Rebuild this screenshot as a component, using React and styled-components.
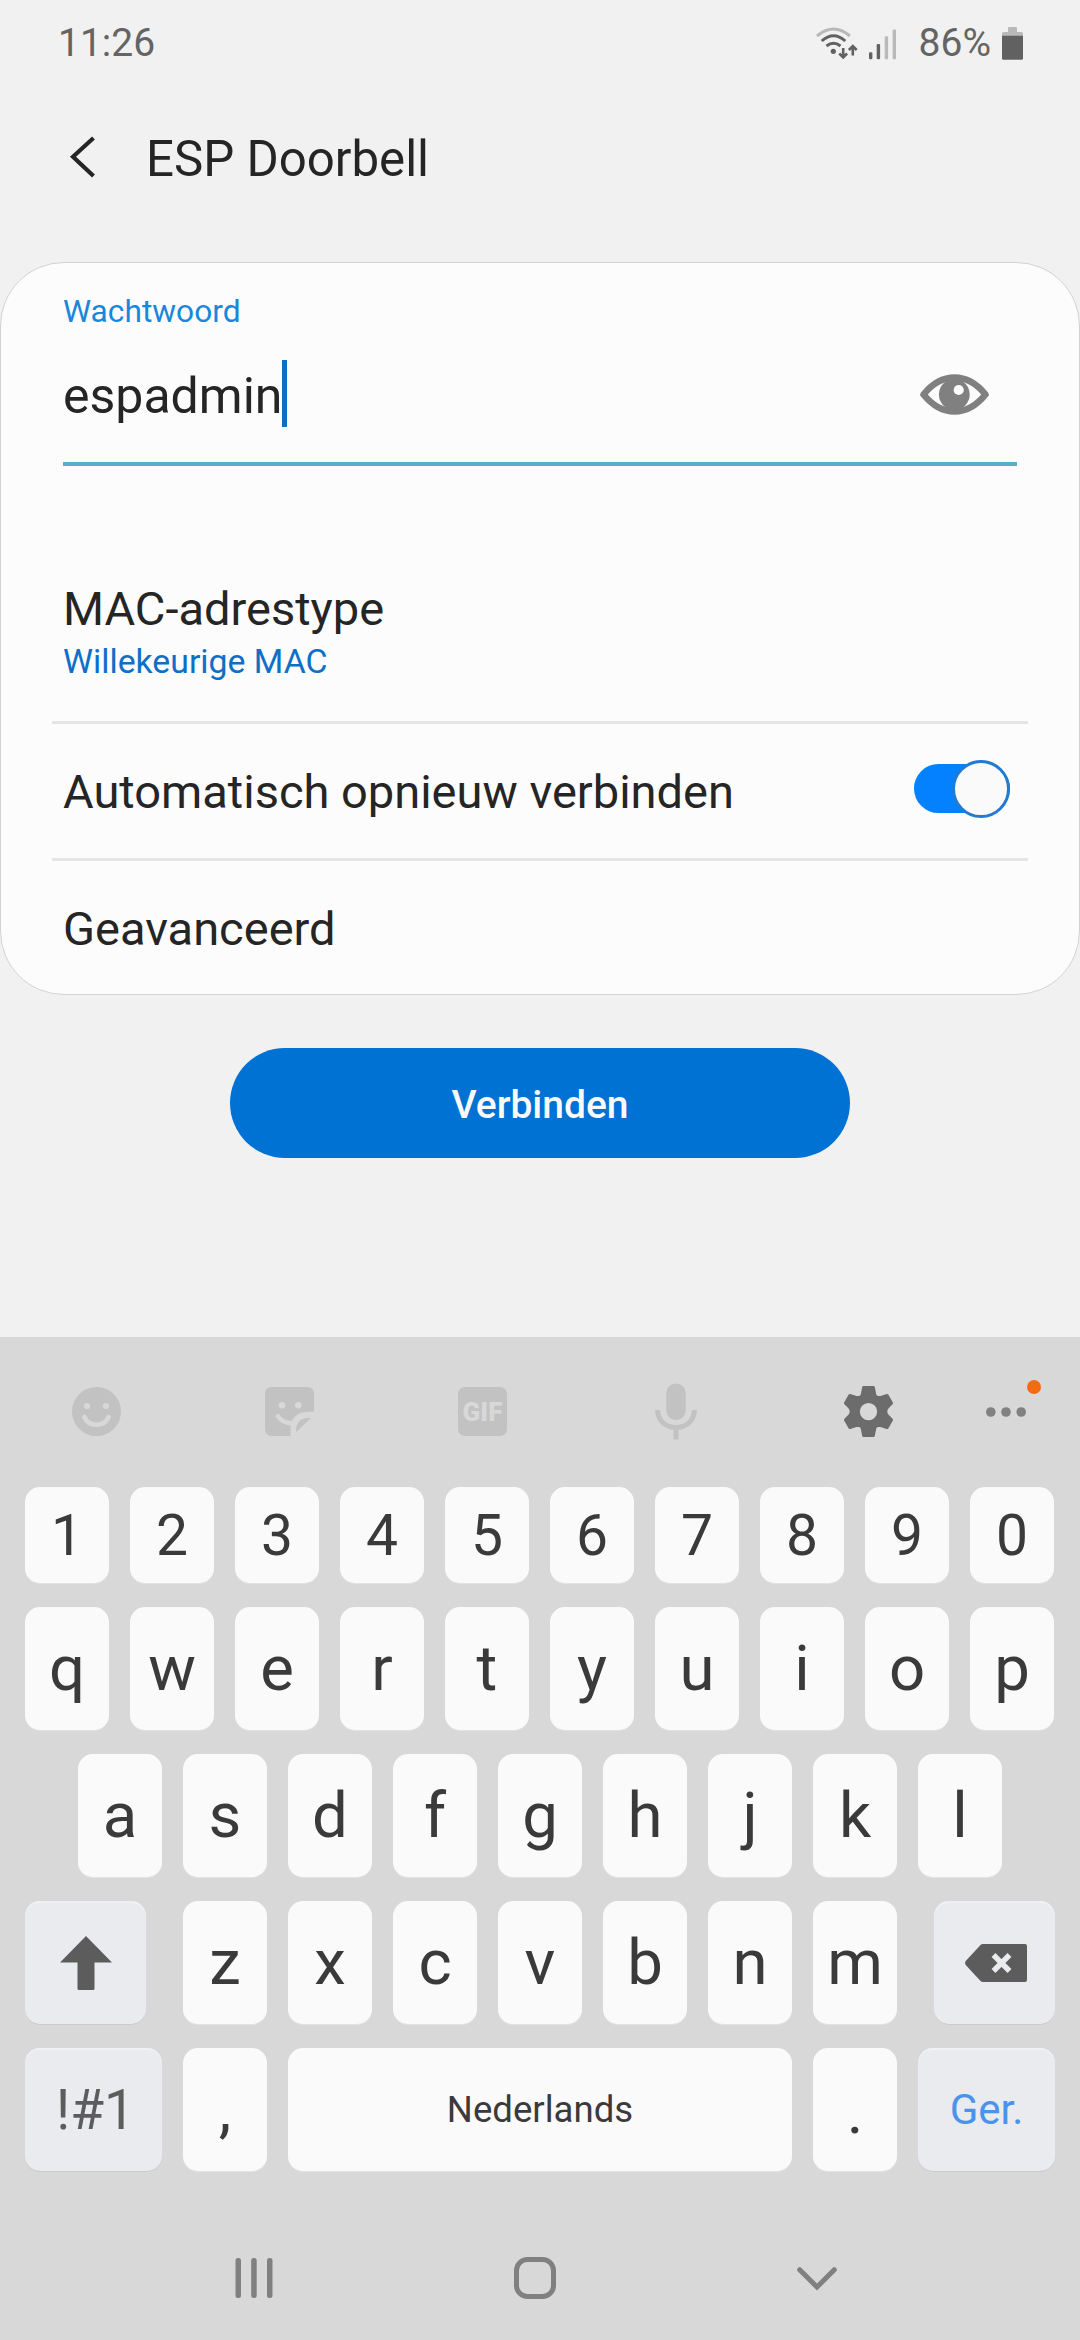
import React from "react";
import styled, { createGlobalStyle } from "styled-components";

const GlobalStyle = createGlobalStyle`
  * { box-sizing: border-box; }
  body { margin: 0; background: #f1f1f1; }
`;

const Screen = styled.main`
  display: flex;
  flex-direction: column;
  width: 1080px;
  height: 2340px;
  overflow: hidden;
  background: #f1f1f1;
  color: #252525;
  font-family: Roboto, "Liberation Sans", sans-serif;
`;

const Icon = styled.svg`
  display: block;
  flex: none;
  width: ${(p) => p.$w}px;
  height: ${(p) => p.$h}px;
  margin: ${(p) => p.$margin || 0};
  overflow: visible;
`;

/* Status bar */

const StatusBar = styled.header`
  display: flex;
  align-items: center;
  justify-content: space-between;
  height: 85px;
  padding: 0 57px 0 58px;
  color: #646464;
  font-size: 39px;
  line-height: 46px;
`;

const StatusIcons = styled.div`
  display: flex;
  align-items: center;
`;

const BatteryLevel = styled.span`
  margin: 0 11px 0 22px;
`;

/* App bar */

const AppBar = styled.nav`
  display: flex;
  align-items: center;
  height: 148px;
  margin-bottom: 29px;
  padding-left: 70px;
`;

const BackButton = styled.button`
  display: flex;
  margin: 0 51px 5px 0;
  padding: 0;
  border: 0;
  background: none;
`;

const Title = styled.h1`
  margin: 0;
  font-size: 49.2px;
  font-weight: 400;
  line-height: 58px;
`;

/* Settings card */

const Card = styled.section`
  display: flex;
  flex-direction: column;
  height: 733px;
  padding: 28px 51px 0;
  border: 1px solid #d2d2d2;
  border-radius: 64px;
  background: #fcfcfc;
`;

const FieldLabel = styled.label`
  flex: none;
  height: 40px;
  padding: 1px 0 0 11px;
  color: #1a87da;
  font-size: 31.7px;
  line-height: 40px;
`;

const Field = styled.div`
  display: flex;
  flex: none;
  align-items: center;
  height: 135px;
  margin: 0 11px;
  padding: 0 28px 2px 0;
  border-bottom: 4px solid #5eabcc;
`;

const FieldValue = styled.span`
  padding-top: 1px;
  font-size: 50px;
  line-height: 60px;
`;

const Caret = styled.span`
  width: 5px;
  height: 67px;
  margin: 0 auto 4px 0;
  background: #0b70c5;
`;

const Row = styled.div`
  display: flex;
  flex: none;
  align-items: center;
  justify-content: space-between;
  height: 134px;
  padding: 1px 18px 0 11px;

  &:last-child {
    height: 133px;
    padding-top: 3px;
  }
`;

const StackedRow = styled.div`
  display: flex;
  flex: none;
  flex-direction: column;
  height: 255px;
  padding: 116px 11px 0;
`;

const RowTitle = styled.span`
  font-size: 47px;
  line-height: 54px;
`;

const RowValue = styled.span`
  margin-top: 5px;
  color: #0f6fc6;
  font-size: 33.8px;
  line-height: 42px;
`;

const Divider = styled.hr`
  flex: none;
  width: 100%;
  height: 3px;
  margin: 0;
  border: 0;
  background: #e5e5e5;
`;

const Switch = styled.button`
  display: flex;
  align-items: center;
  justify-content: flex-end;
  width: 96px;
  height: 49px;
  margin-bottom: 6px;
  padding: 0;
  border: 0;
  border-radius: 25px;
  background: #0381fe;
`;

const Thumb = styled.span`
  flex: none;
  width: 58px;
  height: 58px;
  border: 3px solid #217bd2;
  border-radius: 50%;
  background: #fafafa;
`;

const ConnectButton = styled.button`
  align-self: center;
  width: 620px;
  height: 110px;
  margin-top: 53px;
  padding: 3px 0 0;
  border: 0;
  border-radius: 55px;
  background: #0072d4;
  color: #fafafa;
  font: 500 39px/46px Roboto, "Liberation Sans", sans-serif;
`;

/* Keyboard */

const Keyboard = styled.section`
  display: flex;
  flex-direction: column;
  height: 1003px;
  margin-top: auto;
  background: #d8d8d8;
`;

const Toolbar = styled.div`
  display: flex;
  height: 150px;
  padding-bottom: 1px;
`;

const Tool = styled.div`
  display: flex;
  align-items: center;
  justify-content: center;
  width: ${(p) => p.$w || 193}px;
  position: relative;
`;

const GifBadge = styled.span`
  width: 49px;
  height: 49px;
  border-radius: 7px;
  background: #c2c2c2;
  color: #d8d8d8;
  font-size: 26px;
  font-weight: 900;
  line-height: 50px;
  text-align: center;
`;

const NoticeDot = styled.span`
  position: absolute;
  top: 43px;
  right: 6px;
  width: 14px;
  height: 14px;
  border-radius: 50%;
  background: #f46c12;
`;

const Keys = styled.div`
  display: flex;
  flex-direction: column;
  gap: 24px;
`;

const KeyRow = styled.div`
  display: flex;
  gap: 21px;
  height: ${(p) => p.$h || 123}px;
  padding-left: ${(p) => p.$inset || 25}px;
`;

const Key = styled.button`
  display: flex;
  flex: none;
  align-items: center;
  justify-content: center;
  width: ${(p) => p.$w || 84}px;
  margin: ${(p) => p.$margin || 0};
  padding: ${(p) => p.$pad || "0"};
  border: 0;
  border-radius: 15px;
  background: ${(p) => (p.$fn ? "#e9ebef" : "#fafafa")};
  box-shadow: ${(p) =>
    p.$fn ? "0 1px 0 #c9cacd, inset 0 2px 0 #f0f1f3" : "0 1px 0 #e3e3e3"};
  color: ${(p) => p.$color || "#3a3a3a"};
  font: 400 ${(p) => p.$size || 63.5}px/1.17 Roboto, "Liberation Sans", sans-serif;
`;

const NavBar = styled.nav`
  display: flex;
  height: 124px;
  margin-top: auto;
  padding-left: 113px;
`;

const NavItem = styled.div`
  display: flex;
  align-items: center;
  justify-content: center;
  width: 281.5px;
`;

function WifiIcon() {
  return (
    <Icon $w={42} $h={34} viewBox="816 23 42 34" fill="none" strokeLinecap="butt">
      <path d="M817 33Q833.5 19 850 33" stroke="#b9b9b9" strokeWidth="3" />
      <path d="M821.700 38Q833.500 27.500 845.300 38" stroke="#616161" strokeWidth="3" />
      <path d="M826.500 43Q833.500 37.500 840.500 43" stroke="#616161" strokeWidth="3" />
      <circle cx="833.300" cy="48.300" r="2.600" fill="#616161" />
      <path
        d="M843.200 45v9M839.300 50.500l3.900 3.900 3.900-3.900M852.800 52.600v-9M848.900 47l3.900-3.900 3.900 3.900"
        stroke="#616161"
        strokeWidth="2.600"
      />
    </Icon>
  );
}

function SignalIcon() {
  return (
    <Icon $w={28} $h={34} $margin="0 0 0 11px" viewBox="869 23 28 34">
      <rect x="869" y="49.300" width="3.400" height="6.900" rx="1.200" fill="#616161" />
      <rect x="876.700" y="41" width="3.400" height="15.200" rx="1.200" fill="#616161" />
      <rect x="884.700" y="33.200" width="3.400" height="23" rx="1.200" fill="#b9b9b9" />
      <rect x="892.600" y="26.500" width="3.400" height="29.700" rx="1.200" fill="#b9b9b9" />
    </Icon>
  );
}

function BatteryIcon() {
  return (
    <Icon $w={21} $h={34} viewBox="0 0 21 34">
      <path d="M6 6V2q0-1 1-1h7q1 0 1 1v4h4.500q1.500 0 1.500 1.500V12H0V7.500Q0 6 1.500 6z" fill="#b9b9b9" />
      <path d="M0 9.700h21v22.500q0 1.500-1.500 1.500h-18Q0 33.700 0 32.200z" fill="#616161" />
    </Icon>
  );
}

function EyeIcon() {
  return (
    <Icon $w={69} $h={41} $margin="0 0 2px" viewBox="0 0 69 41">
      <path
        d="M3.500 20.500C12 10 22 3.500 34.500 3.500S57 10 65.500 20.500C57 31 47 37.500 34.500 37.500S12 31 3.500 20.500Z"
        fill="none"
        stroke="#808080"
        strokeWidth="6.600"
        strokeLinejoin="round"
      />
      <circle cx="34.300" cy="20.500" r="15.400" fill="#808080" />
      <circle cx="38.700" cy="16" r="5.100" fill="#fcfcfc" />
    </Icon>
  );
}

function SmileyIcon() {
  return (
    <Icon $w={49} $h={49} viewBox="0 0 49 49">
      <circle cx="24.500" cy="24.500" r="24.500" fill="#c2c2c2" />
      <circle cx="15" cy="19" r="3.100" fill="#d8d8d8" />
      <circle cx="34" cy="19" r="3.100" fill="#d8d8d8" />
      <path d="M12.300 30C17 40.300 32 40.300 36.700 30" fill="none" stroke="#d8d8d8" strokeWidth="4.600" strokeLinecap="round" />
    </Icon>
  );
}

function StickerIcon() {
  return (
    <Icon $w={49} $h={49} viewBox="0 0 49 49">
      <path
        d="M7 0H42Q49 0 49 7V24.800H43C31 25 25.500 32 25.500 42V49H7Q0 49 0 42V7Q0 0 7 0Z"
        fill="#c2c2c2"
      />
      <path d="M46 31 31 45.300C30.500 36 35.500 31 43 31Z" fill="#c2c2c2" />
      <circle cx="17" cy="18.300" r="3.300" fill="#d8d8d8" />
      <circle cx="33.300" cy="18.300" r="3.300" fill="#d8d8d8" />
      <path d="M12.800 29C16 34 20.500 36.300 27.500 36.200" fill="none" stroke="#d8d8d8" strokeWidth="4.400" strokeLinecap="round" />
    </Icon>
  );
}

function MicIcon() {
  return (
    <Icon $w={42} $h={57} viewBox="0 0 42 57">
      <rect x="11.300" y="0.400" width="19.400" height="36.800" rx="9.700" fill="#c2c2c2" />
      <path d="M2.500 27C3 50.300 39 50.300 39.500 27M21 44.500V56.600" fill="none" stroke="#c2c2c2" strokeWidth="5" />
    </Icon>
  );
}

function GearIcon() {
  return (
    <Icon $w={49} $h={51} viewBox="0 0 49 51">
      <path
        d="M19.500 0h10q1 0 1.300 1l1.400 7.200q.5 1.500 2 1.700h2.300L42.600 8q1.100-.3 1.700.6l4.600 8q.4 1-.4 1.700l-4.300 4.500q-.9 1-.9 2.700t.9 2.700l4.300 4.500q.8.700.4 1.700l-4.600 8q-.6.900-1.700.6l-6.100-1.900h-2.300q-1.500.2-2 1.700L30.800 50q-.3 1-1.300 1h-10q-1 0-1.300-1l-1.400-7.200q-.5-1.500-2-1.700h-2.300L6.400 43q-1.100.3-1.700-.6l-4.600-8q-.4-1 .4-1.700l4.300-4.500q.9-1 .9-2.700t-.9-2.700L.5 18.300q-.8-.7-.4-1.700l4.600-8Q5.300 7.700 6.400 8l6.100 1.900h2.300q1.500-.2 2-1.700L18.200 1q.3-1 1.300-1ZM24.500 16.900a8.700 8.700 0 1 0 0 17.400a8.700 8.700 0 1 0 0-17.400Z"
        fill="#6c6c6c"
        fillRule="evenodd"
      />
    </Icon>
  );
}

function BackspaceIcon() {
  return (
    <Icon $w={62} $h={38} viewBox="0 0 62 38">
      <path d="M18 0H60Q62 0 62 2V36Q62 38 60 38H18Q16.500 38 15.300 36.800L.7 21Q-.5 19 .7 17L15.300 1.200Q16.500 0 18 0Z" fill="#5c5c5c" />
      <path d="M28.500 11 44.500 27M44.500 11 28.500 27" stroke="#e9ebef" strokeWidth="5.400" />
    </Icon>
  );
}

const letters = (text) =>
  [...text].map((c) => (
    <Key key={c} $pad="1px 0 0">
      {c}
    </Key>
  ));

export default function App() {
  return (
    <>
      <GlobalStyle />
      <Screen>
        <StatusBar>
          <span>11:26</span>
          <StatusIcons>
            <WifiIcon />
            <SignalIcon />
            <BatteryLevel>86%</BatteryLevel>
            <BatteryIcon />
          </StatusIcons>
        </StatusBar>

        <AppBar>
          <BackButton aria-label="Terug">
            <Icon $w={25} $h={42} viewBox="0 0 25 42">
              <path d="M23.500 2 3 20.700 23.500 40" fill="none" stroke="#252525" strokeWidth="4.200" />
            </Icon>
          </BackButton>
          <Title>ESP Doorbell</Title>
        </AppBar>

        <Card>
          <FieldLabel>Wachtwoord</FieldLabel>
          <Field>
            <FieldValue>espadmin</FieldValue>
            <Caret />
            <EyeIcon />
          </Field>
          <StackedRow>
            <RowTitle>MAC-adrestype</RowTitle>
            <RowValue>Willekeurige MAC</RowValue>
          </StackedRow>
          <Divider />
          <Row>
            <RowTitle>Automatisch opnieuw verbinden</RowTitle>
            <Switch role="switch" aria-checked="true">
              <Thumb />
            </Switch>
          </Row>
          <Divider />
          <Row>
            <RowTitle>Geavanceerd</RowTitle>
          </Row>
        </Card>

        <ConnectButton>Verbinden</ConnectButton>

        <Keyboard>
          <Toolbar>
            <Tool><SmileyIcon /></Tool>
            <Tool><StickerIcon /></Tool>
            <Tool><GifBadge>GIF</GifBadge></Tool>
            <Tool><MicIcon /></Tool>
            <Tool><GearIcon /></Tool>
            <Tool $w={82}>
              <Icon $w={40} $h={10} viewBox="0 0 40 10" fill="#818181">
                <circle cx="4.800" cy="5" r="4.800" />
                <circle cx="20" cy="5" r="4.800" />
                <circle cx="35.200" cy="5" r="4.800" />
              </Icon>
              <NoticeDot />
            </Tool>
          </Toolbar>
          <Keys>
            <KeyRow $h={96}>
              {[..."1234567890"].map((c) => (
                <Key key={c} $size={57} $pad="2px 0 0">{c}</Key>
              ))}
            </KeyRow>
            <KeyRow>{letters("qwertyuiop")}</KeyRow>
            <KeyRow $inset={78}>{letters("asdfghjkl")}</KeyRow>
            <KeyRow>
              <Key $fn $w={121} $margin="0 16px 0 0" aria-label="Shift">
                <Icon $w={52} $h={54} viewBox="0 0 52 54">
                  <path d="M26 0 52 26.500H34.500V52.500Q34.500 54 33 54H19Q17.500 54 17.500 52.500V26.500H0Z" fill="#5c5c5c" />
                </Icon>
              </Key>
              {letters("zxcvbnm")}
              <Key $fn $w={121} $margin="0 0 0 16px" $pad="0 0 0 3px" aria-label="Backspace">
                <BackspaceIcon />
              </Key>
            </KeyRow>
            <KeyRow>
              <Key $fn $w={137} $size={55} $pad="1px 0 0 4px" $color="#5c5c5c">!#1</Key>
              <Key $pad="1px 0 0">,</Key>
              <Key $w={504} $size={36.6} $pad="1px 0 0">Nederlands</Key>
              <Key $pad="6px 0 0">.</Key>
              <Key $fn $w={137} $size={42} $color="#4b93ea">Ger.</Key>
            </KeyRow>
          </Keys>
          <NavBar>
            <NavItem>
              <Icon $w={38} $h={40} viewBox="0 0 38 40" fill="#808080">
                <rect x="0.500" width="5.500" height="40" rx="2.500" />
                <rect x="16.200" width="5.500" height="40" rx="2.500" />
                <rect x="32" width="5.500" height="40" rx="2.500" />
              </Icon>
            </NavItem>
            <NavItem>
              <Icon $w={42} $h={42} viewBox="0 0 42 42">
                <rect x="2.500" y="2.500" width="37" height="37" rx="11" fill="none" stroke="#808080" strokeWidth="5" />
              </Icon>
            </NavItem>
            <NavItem>
              <Icon $w={40} $h={23} viewBox="0 0 40 23">
                <path d="M2.700 2.700 20 20 37.300 2.700" fill="none" stroke="#808080" strokeWidth="5" strokeLinecap="round" />
              </Icon>
            </NavItem>
          </NavBar>
        </Keyboard>
      </Screen>
    </>
  );
}
